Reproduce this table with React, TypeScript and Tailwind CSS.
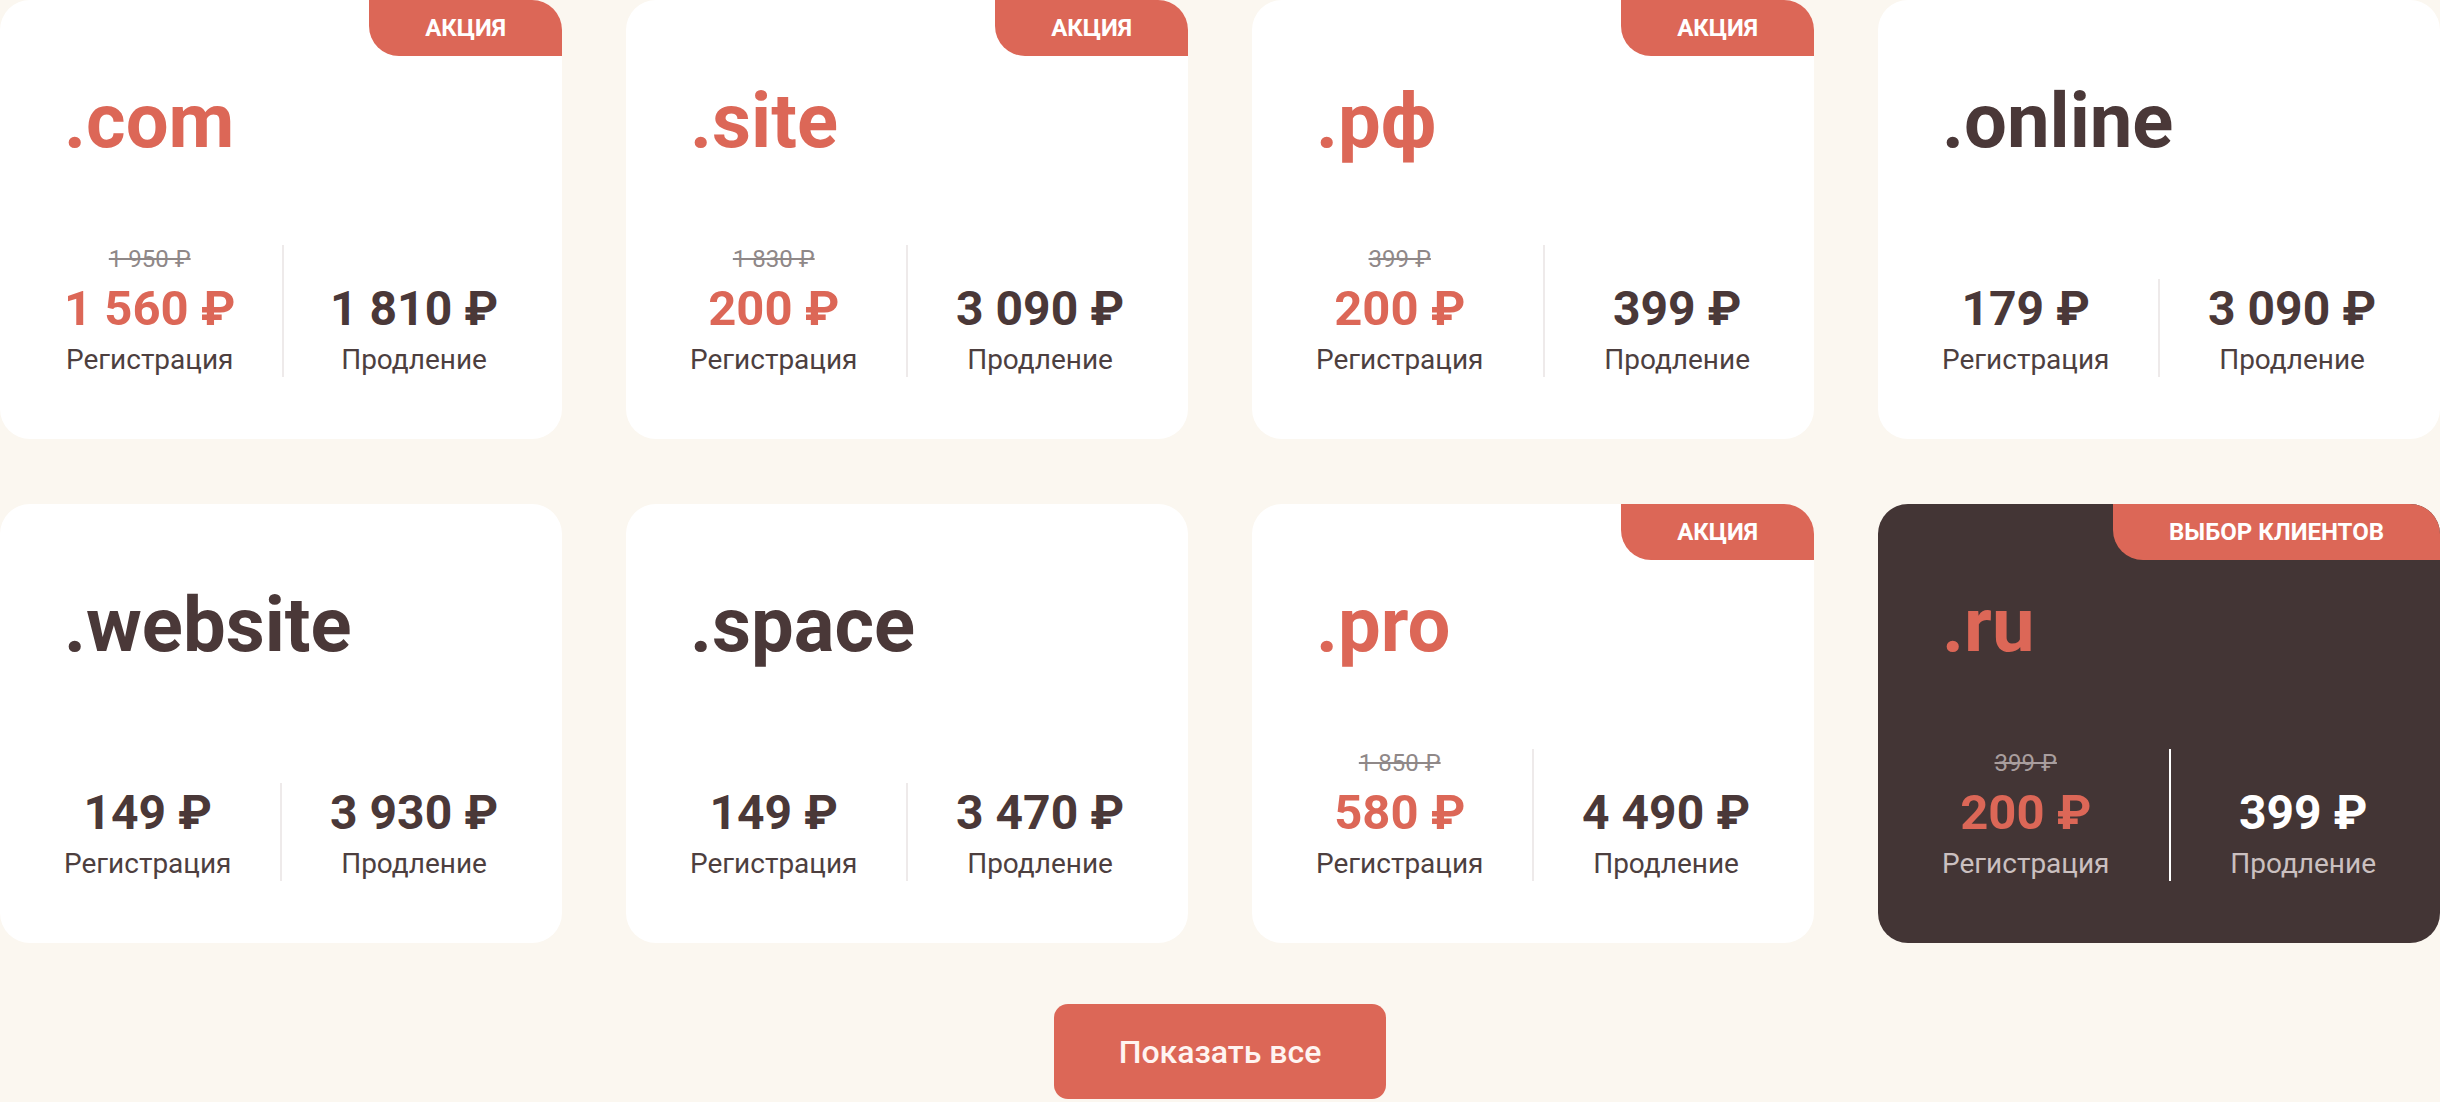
import React from 'react'

type Zone = {
  name: string
  accent?: boolean
  badge?: string
  oldPrice?: string
  price: string
  promo?: boolean
  renew: string
  dark?: boolean
}

const zones: Array<Zone> = [
  { name: '.com', accent: true, badge: 'АКЦИЯ', oldPrice: '1 950 ₽', price: '1 560 ₽', promo: true, renew: '1 810 ₽' },
  { name: '.site', accent: true, badge: 'АКЦИЯ', oldPrice: '1 830 ₽', price: '200 ₽', promo: true, renew: '3 090 ₽' },
  { name: '.рф', accent: true, badge: 'АКЦИЯ', oldPrice: '399 ₽', price: '200 ₽', promo: true, renew: '399 ₽' },
  { name: '.online', price: '179 ₽', renew: '3 090 ₽' },
  { name: '.website', price: '149 ₽', renew: '3 930 ₽' },
  { name: '.space', price: '149 ₽', renew: '3 470 ₽' },
  { name: '.pro', accent: true, badge: 'АКЦИЯ', oldPrice: '1 850 ₽', price: '580 ₽', promo: true, renew: '4 490 ₽' },
  { name: '.ru', accent: true, badge: 'ВЫБОР КЛИЕНТОВ', oldPrice: '399 ₽', price: '200 ₽', promo: true, renew: '399 ₽', dark: true },
]

const nb = (s: string) => s.replace(/ /g, '\u00a0')

const ZoneCard: React.FC<{ zone: Zone }> = ({ zone }) => {
  const dark = zone.dark
  return (
    <div
      className={`relative flex flex-col h-[439px] overflow-hidden rounded-[30px] px-[64px] pt-[83px] pb-[62px] ${
        dark ? 'bg-[#433535]' : 'bg-white'
      }`}
    >
      {zone.badge && (
        <div className="absolute top-0 right-0 flex items-center h-[56px] px-[56px] rounded-bl-[30px] bg-[#dc6757] text-[24px] font-bold leading-none text-white">
          {zone.badge}
        </div>
      )}
      <h2
        className={`text-[76px] font-bold leading-none ${
          zone.accent ? 'text-[#dc6757]' : 'text-[#4a3838]'
        }`}
      >
        {zone.name}
      </h2>
      <div className="flex justify-between mt-auto">
        <div className="flex flex-col items-center justify-end">
          {zone.oldPrice && (
            <span
              className={`text-[24px] leading-[29px] line-through mb-[5px] ${
                dark ? 'text-[#a99e9e]' : 'text-[#8f8888]'
              }`}
            >
              {nb(zone.oldPrice)}
            </span>
          )}
          <span
            className={`font-bold leading-[60px] ${
              zone.promo ? 'text-[49px] text-[#dc6757]' : 'text-[48px] text-[#4a3838]'
            }`}
          >
            {nb(zone.price)}
          </span>
          <span
            className={`mt-[4px] text-[28px] leading-[34px] ${
              dark ? 'text-[#cbc0c0]' : 'text-[#4d3f3f]'
            }`}
          >
            Регистрация
          </span>
        </div>
        <div className={`w-[2px] ${dark ? 'bg-white' : 'bg-[#eeeaea]'}`} />
        <div className="flex flex-col items-center justify-end">
          <span
            className={`text-[48px] font-bold leading-[60px] ${
              dark ? 'text-white' : 'text-[#4a3838]'
            }`}
          >
            {nb(zone.renew)}
          </span>
          <span
            className={`mt-[4px] text-[28px] leading-[34px] ${
              dark ? 'text-[#cbc0c0]' : 'text-[#4d3f3f]'
            }`}
          >
            Продление
          </span>
        </div>
      </div>
    </div>
  )
}

const App: React.FC = () => {
  return (
    <div className="min-h-[1102px] bg-[#fbf7f0] font-['Roboto',sans-serif]">
      <div className="grid grid-cols-4 gap-x-[64px] gap-y-[65px]">
        {zones.map((z) => (
          <ZoneCard key={z.name} zone={z} />
        ))}
      </div>
      <div className="flex justify-center pt-[61px]">
        <button className="w-[332px] h-[95px] rounded-[14px] bg-[#dc6757] text-[32px] font-medium text-[#fff4f1]">
          Показать все
        </button>
      </div>
    </div>
  )
}

export default App
